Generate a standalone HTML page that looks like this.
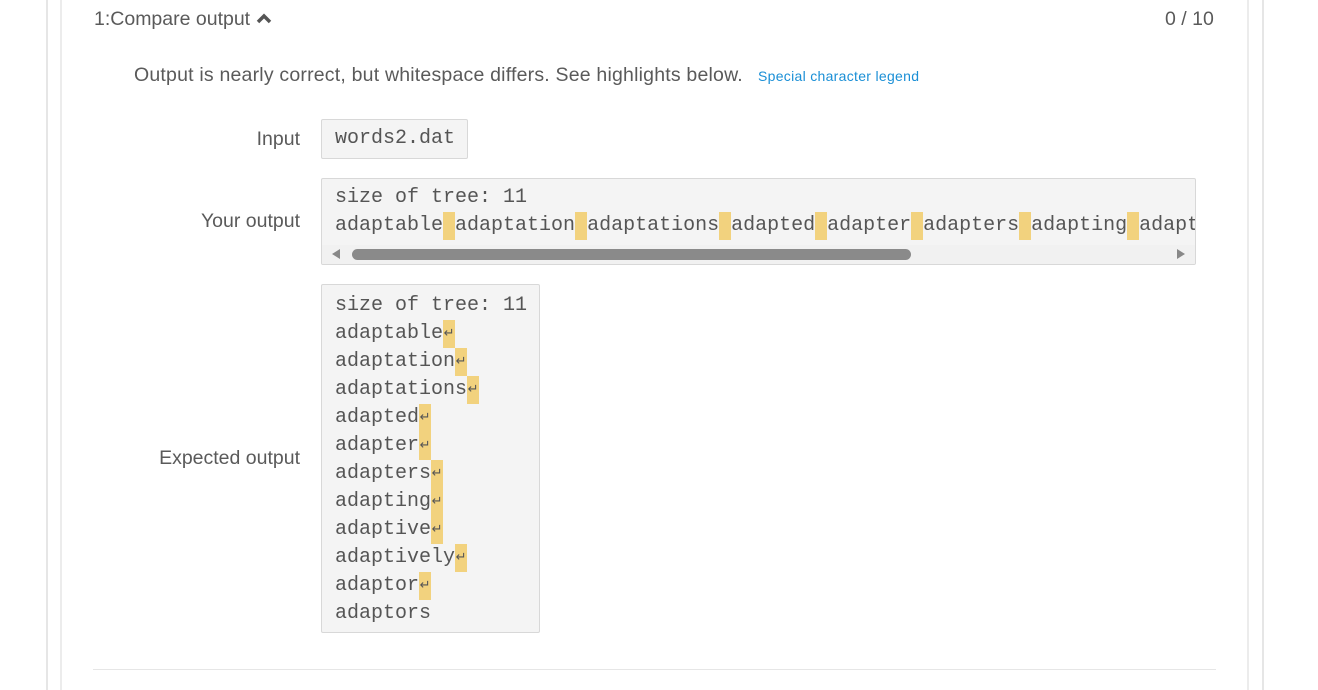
<!DOCTYPE html>
<html><head><style>
body{margin:0;width:1318px;height:678px;background:#fff;overflow:hidden;font-family:"Liberation Sans",sans-serif;position:relative}
.o{position:absolute;left:46px;top:-10px;width:1214px;height:700px;border-left:2px solid #e6e6e6;border-right:2px solid #e6e6e6}
.i{position:absolute;left:60px;top:-10px;width:1185px;height:700px;border-left:2px solid #ececec;border-right:2px solid #ececec}
.t{position:absolute;color:#5a5a5a}
.mono{font-family:"Liberation Mono",monospace;font-size:20px;line-height:28px;color:#555;white-space:pre}
.box{position:absolute;background:#f4f4f4;border:1px solid #d8d8d8;border-radius:2px}
.h{background:#f2d27e;display:inline-block;width:12px;height:28px;vertical-align:top;font-size:13px;line-height:28px;text-align:center;color:#555}
</style></head><body>
<div class="o"></div><div class="i"></div>
<div class="t" style="left:94px;top:8px;font-size:19.5px">1:Compare output <svg width="16" height="12" viewBox="0 0 16 12" style="vertical-align:1px"><path d="M2 10 L8 4 L14 10" stroke="#555" stroke-width="3.5" fill="none"/></svg></div>
<div class="t" style="left:1165px;top:8px;font-size:19.5px">0 / 10</div>
<div class="t" style="left:134px;top:64px;font-size:19.5px;letter-spacing:0.2px">Output is nearly correct, but whitespace differs. See highlights below.</div>
<div class="t" style="left:758px;top:68px;font-size:14px;color:#1a8fd6;letter-spacing:0.3px">Special character legend</div>
<div class="t" style="right:1018px;top:128px;font-size:19.5px">Input</div>
<div class="t" style="right:1018px;top:210px;font-size:19.5px">Your output</div>
<div class="t" style="right:1018px;top:447px;font-size:19.5px">Expected output</div>
<div class="box mono" style="left:321px;top:119px;width:132px;height:38px;padding:0 0 0 13px;line-height:38px">words2.dat</div>
<div class="box" style="left:321px;top:178px;width:873px;height:85px;overflow:hidden">
<div class="mono" style="position:absolute;left:13px;top:5px">size of tree: 11
adaptable<span class="h"></span>adaptation<span class="h"></span>adaptations<span class="h"></span>adapted<span class="h"></span>adapter<span class="h"></span>adapters<span class="h"></span>adapting<span class="h"></span>adaptive</div>
<div style="position:absolute;left:0;top:66px;width:873px;height:19px;background:#f1f1f1"></div>
<div style="position:absolute;left:10px;top:70px;width:0;height:0;border-top:5px solid transparent;border-bottom:5px solid transparent;border-right:8px solid #888"></div>
<div style="position:absolute;left:30px;top:70px;width:559px;height:11px;border-radius:6px;background:#8a8a8a"></div>
<div style="position:absolute;left:855px;top:70px;width:0;height:0;border-top:5px solid transparent;border-bottom:5px solid transparent;border-left:8px solid #888"></div>
</div>
<div class="box mono" style="left:321px;top:284px;width:204px;height:340px;padding:7px 0 0 13px">size of tree: 11
adaptable<span class="h">↵</span>
adaptation<span class="h">↵</span>
adaptations<span class="h">↵</span>
adapted<span class="h">↵</span>
adapter<span class="h">↵</span>
adapters<span class="h">↵</span>
adapting<span class="h">↵</span>
adaptive<span class="h">↵</span>
adaptively<span class="h">↵</span>
adaptor<span class="h">↵</span>
adaptors</div>
<div style="position:absolute;left:93px;top:669px;width:1123px;height:1px;background:#e6e6e6"></div>
</body></html>
